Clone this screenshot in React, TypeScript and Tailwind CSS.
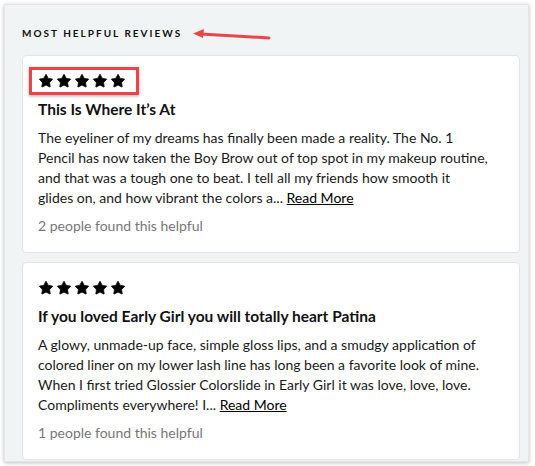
import { Star } from "lucide-react";

const reviews = [
  {
    title: "This Is Where It’s At",
    lines: [
      "The eyeliner of my dreams has finally been made a reality. The No. 1",
      "Pencil has now taken the Boy Brow out of top spot in my makeup routine,",
      "and that was a tough one to beat. I tell all my friends how smooth it",
      "glides on, and how vibrant the colors a...",
    ],
    helpful: "2 people found this helpful",
    marked: true,
  },
  {
    title: "If you loved Early Girl you will totally heart Patina",
    lines: [
      "A glowy, unmade-up face, simple gloss lips, and a smudgy application of",
      "colored liner on my lower lash line has long been a favorite look of mine.",
      "When I first tried Glossier Colorslide in Early Girl it was love, love, love.",
      "Compliments everywhere! I...",
    ],
    helpful: "1 people found this helpful",
    marked: false,
  },
];

function Stars() {
  return (
    <div className="flex gap-[2px]">
      {[0, 1, 2, 3, 4].map((i) => (
        <Star key={i} size={16} fill="#000" stroke="#000" strokeWidth={1} />
      ))}
    </div>
  );
}

function ReviewCard({ r }: { r: (typeof reviews)[number] }) {
  return (
    <div className="bg-white rounded border border-[#e1e5e7] pl-[15px] pr-4 pt-4 pb-4">
      <div className="h-[18px] flex items-center">
        {r.marked ? (
          <div className="-ml-[9px] pl-[6px] pr-[10px] py-[3px] border-[3px] border-[#e8464b] shadow-[0_1px_3px_rgba(0,0,0,0.35)]">
            <Stars />
          </div>
        ) : (
          <Stars />
        )}
      </div>
      <div className="mt-[9px] text-[15.5px] font-bold leading-5 text-[#111]">{r.title}</div>
      <p className="mt-[9px] text-[14px] leading-5 text-[#1a1a1a] whitespace-nowrap">
        {r.lines.map((line, i) => (
          <span key={i}>
            {line}
            {i < r.lines.length - 1 ? <br /> : null}
          </span>
        ))}{" "}
        <span className="underline text-black">Read More</span>
      </p>
      <div className="mt-[8px] text-[14px] leading-5 text-[#777]">{r.helpful}</div>
    </div>
  );
}

export default function App() {
  return (
    <div className="w-[535px] h-[466px] bg-white p-1 pr-[6px]" style={{ fontFamily: "Lato, sans-serif" }}>
      <div className="h-[458px] bg-[#f1f4f5] border border-[#e3e6e8] shadow-[0_1px_4px_rgba(0,0,0,0.25)] pl-[17px] pr-[8px] pt-[20px]">
        <div className="flex items-center h-4">
          <span className="text-[10px] font-bold tracking-[0.2em] text-[#111]">MOST HELPFUL REVIEWS</span>
          <svg width="80" height="14" viewBox="0 0 80 14" className="ml-[9px] mt-1">
            <path d="M78 10 L10 6" stroke="#e8474a" strokeWidth="3" strokeLinecap="round" />
            <path d="M2 5.5 L13 1 L12 10 Z" fill="#e8474a" />
          </svg>
        </div>
        <div className="mt-[14px] flex flex-col gap-[9px]">
          {reviews.map((r) => (
            <ReviewCard key={r.title} r={r} />
          ))}
        </div>
      </div>
    </div>
  );
}
